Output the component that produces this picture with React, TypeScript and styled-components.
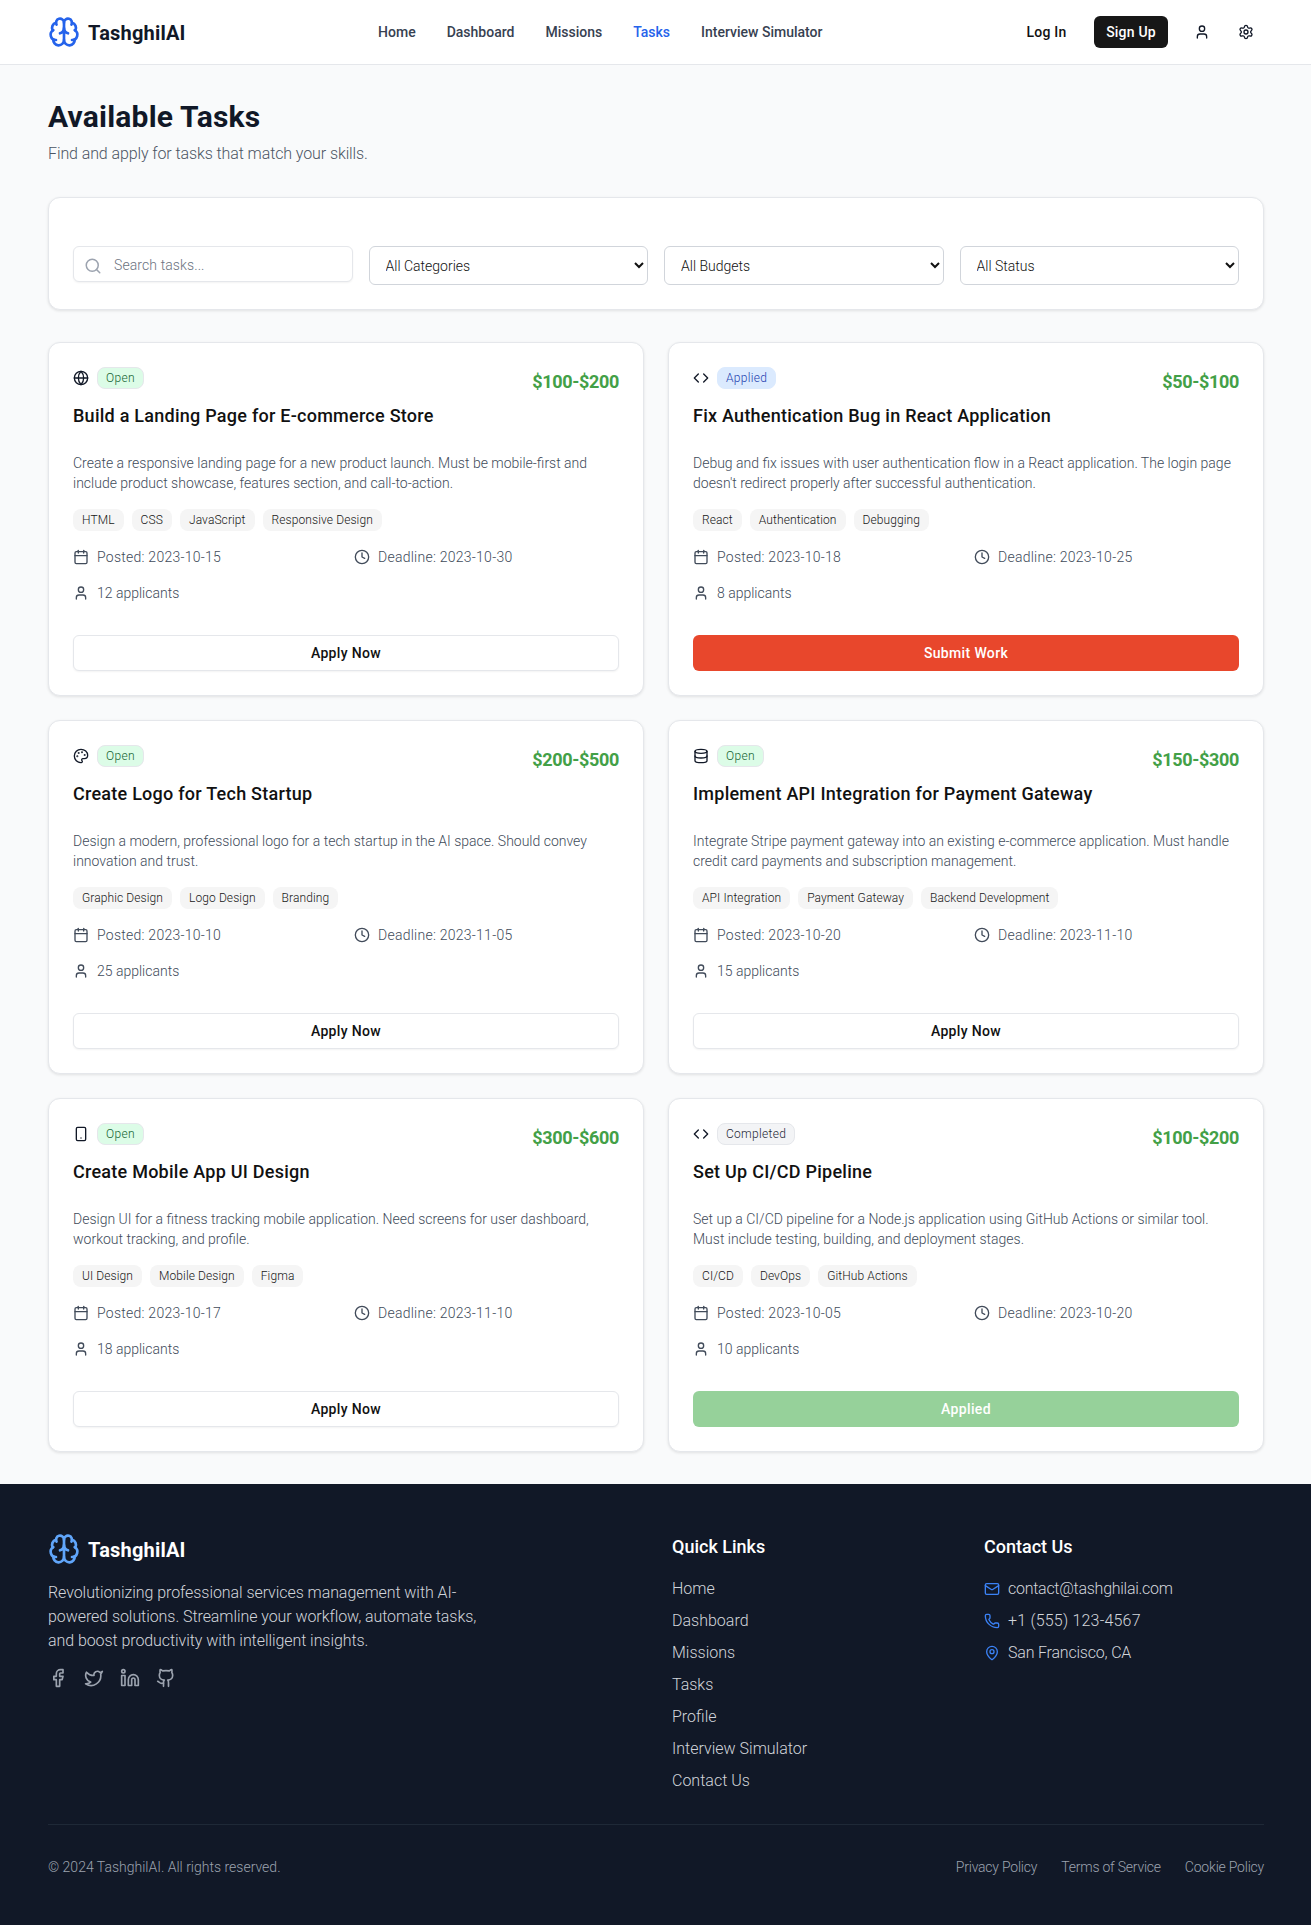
import React from 'react';
import styled, { createGlobalStyle } from 'styled-components';
import { Brain, User, Settings, Search, Globe, Code, Palette, Database, Smartphone, Calendar, Clock, Facebook, Twitter, Linkedin, Github, Mail, Phone, MapPin } from 'lucide-react';

const Global = createGlobalStyle`
  html, body { margin: 0; padding: 0; background: #f9fafb; }
  body { font-family: Roboto, "Liberation Sans", sans-serif; color: #111827; }
  * { box-sizing: border-box; }
`;
const Header = styled.header`
  height: 65px; background: #fff; border-bottom: 1px solid #e5e7eb;
  display: flex; align-items: center; justify-content: space-between; padding: 0 47px 0 48px;
`;
const LogoWrap = styled.div`display: flex; align-items: center; gap: 8px;`;
const LogoText = styled.span<{ $light?: boolean }>`
  font-size: 20px; font-weight: 700; line-height: 28px; letter-spacing: .2px; margin-top: 2px; color: ${p => (p.$light ? '#fff' : '#111827')};
`;
const Nav = styled.nav`display: flex; gap: 31px;`;
const NavLink = styled.a<{ $active?: boolean }>`
  font-size: 14px; font-weight: 500; line-height: 20px; color: ${p => (p.$active ? '#2563eb' : '#374151')};
`;
const Actions = styled.div`display: flex; align-items: center;`;
const LogIn = styled.button`
  border: 0; background: none; font: 500 14px/20px Roboto, sans-serif; letter-spacing: .2px; color: #111; padding: 0; margin-right: 16px; width: 63px; white-space: nowrap;
`;
const SignUp = styled.button`
  border: 0; background: #171717; color: #fff; font: 500 14px/20px Roboto, sans-serif; letter-spacing: .2px; height: 32px; width: 74px; border-radius: 6px; margin-right: 26px;
`;
const IconBtn = styled.span`display: flex; color: #111827; margin-right: 28px; &:last-child { margin-right: 10px; }`;
const Main = styled.main`padding: 34px 47px 32px 48px;`;
const Title = styled.h1`margin: 0 0 7px; font-size: 30px; font-weight: 700; line-height: 36px; letter-spacing: .2px; color: #111827;`;
const Subtitle = styled.p`margin: 0 0 31px; font-size: 16px; font-weight: 300; line-height: 24px; letter-spacing: -.1px; color: #4b5563;`;
const FilterCard = styled.section`
  background: #fff; border: 1px solid #e5e7eb; border-radius: 12px; box-shadow: 0 1px 3px rgba(0,0,0,.1);
  padding: 48px 24px 24px; margin-bottom: 32px; height: 113px;
  display: grid; grid-template-columns: repeat(4, 1fr); gap: 16px; align-items: start;
`;
const SearchBox = styled.label`
  height: 36px; border: 1px solid #e5e7eb; border-radius: 6px; background: #fff; display: flex; align-items: center; gap: 12px; padding: 0 10px;
  box-shadow: 0 1px 2px rgba(0,0,0,.05); color: #9ca3af;
  svg { margin-top: 3px; flex: none; }
`;
const SearchInput = styled.input`
  border: 0; outline: 0; flex: 1; min-width: 0; font: 300 14px/20px Roboto, sans-serif; letter-spacing: .1px; background: transparent; padding: 1px 0 0;
  &::placeholder { color: #6b7280; }
`;
const Select = styled.select`
  height: 39px; border: 1px solid #d1d5db; border-radius: 6px; background: #fff; font: 300 14px/20px Roboto, sans-serif; color: #111; padding: 0 12px; width: 100%;
`;
const Grid = styled.div`display: grid; grid-template-columns: 1fr 1fr; gap: 24px;`;
const Card = styled.article`
  background: #fff; border: 1px solid #e5e7eb; border-radius: 12px; box-shadow: 0 1px 3px rgba(0,0,0,.1); padding: 24px; height: 354px;
`;
const CardTop = styled.div`display: flex; justify-content: space-between; height: 28px; margin-bottom: 7px;`;
const TopLeft = styled.div`display: flex; align-items: center; gap: 8px; height: 22px; color: #111827;`;
const Badge = styled.span<{ $kind: string }>`
  height: 22px; border-radius: 8px; padding: 0 8px; font-size: 12px; font-weight: 300; line-height: 20px; letter-spacing: .3px; border: 1px solid;
  ${p => p.$kind === 'Open' && 'background:#dcfce7;color:#166534;border-color:#e5e7eb;'}
  ${p => p.$kind === 'Applied' && 'background:#dbeafe;color:#1e40af;border-color:#dbeafe;'}
  ${p => p.$kind === 'Completed' && 'background:#f3f4f6;color:#1f2937;border-color:#e5e7eb;'}
`;
const Price = styled.span`font-size: 18px; font-weight: 700; line-height: 28px; letter-spacing: -.33px; color: #43a047; padding-top: 1px;`;
const CardTitle = styled.h3`margin: 0 0 23px; font-size: 18px; font-weight: 500; line-height: 28px; letter-spacing: .25px; color: #111;`;
const Desc = styled.p`margin: 0 0 16px; font-size: 14px; font-weight: 300; line-height: 20px; color: #414b5a; height: 40px;`;
const Tags = styled.div`display: flex; gap: 8px; margin-bottom: 16px;`;
const Tag = styled.span`height: 22px; border-radius: 8px; background: #f5f5f5; padding: 0 9px; font-size: 12px; font-weight: 300; line-height: 22px; letter-spacing: .1px; color: #171717;`;
const Meta = styled.div`display: grid; grid-template-columns: 1fr 1fr; gap: 16px; margin-bottom: 32px;`;
const MetaItem = styled.div<{ $date?: boolean }>`
  display: flex; align-items: center; gap: 8px; font-size: 14px; font-weight: 300; line-height: 20px; color: #414b5a;
  letter-spacing: ${p => (p.$date ? '.25px' : '0')};
`;
const ActionBtn = styled.button<{ $kind: string }>`
  display: block; width: 100%; height: 36px; border-radius: 6px; font: 500 14px/20px Roboto, sans-serif; letter-spacing: .35px;
  ${p => p.$kind === 'outline' && 'background:#fff;color:#111;border:1px solid #e5e7eb;box-shadow:0 1px 2px rgba(0,0,0,.05);'}
  ${p => p.$kind === 'submit' && 'background:#e8472c;color:#fff;border:0;'}
  ${p => p.$kind === 'applied' && 'background:#96d19a;color:#fff;border:0;'}
`;
const Footer = styled.footer`background: #111827; height: 441px; padding: 49px 47px 0 48px; color: #d1d5db;`;
const FooterGrid = styled.div`display: grid; grid-template-columns: repeat(4, 1fr); gap: 32px; height: 291px;`;
const FooterAbout = styled.div`grid-column: span 2;`;
const FooterLogo = styled(LogoWrap)`margin-bottom: 16px; height: 32px;`;
const About = styled.p`margin: 0 0 15px; max-width: 448px; font-size: 16px; font-weight: 300; line-height: 24px; letter-spacing: -.07px;`;
const Socials = styled.div`display: flex; gap: 16px; color: #9ca3af;`;
const FooterHeading = styled.h4`margin: 0 0 16px; font-size: 18px; font-weight: 500; line-height: 28px; color: #fff; height: 28px;`;
const LinkList = styled.ul`list-style: none; margin: 0; padding: 0; display: flex; flex-direction: column; gap: 8px;`;
const FooterLink = styled.li<{ $spacing?: number }>`
  display: flex; align-items: center; gap: 8px; font-size: 16px; font-weight: 300; line-height: 24px; letter-spacing: ${p => p.$spacing ?? 0}px;
`;
const FooterBottom = styled.div`
  border-top: 1px solid #1f2937; padding-top: 32px; display: flex; justify-content: space-between; font-size: 14px; font-weight: 300; line-height: 20px; color: #9ca3af;
`;
const LegalLinks = styled.div`display: flex; gap: 24px; letter-spacing: -.22px;`;
const Blue = styled.span`display: flex; color: #3b82f6;`;

const tasks = [
  { icon: Globe, status: 'Open', price: '$100-$200', title: 'Build a Landing Page for E-commerce Store', desc: 'Create a responsive landing page for a new product launch. Must be mobile-first and include product showcase, features section, and call-to-action.', tags: ['HTML', 'CSS', 'JavaScript', 'Responsive Design'], posted: '2023-10-15', deadline: '2023-10-30', applicants: 12, btn: 'Apply Now', kind: 'outline' },
  { icon: Code, status: 'Applied', price: '$50-$100', title: 'Fix Authentication Bug in React Application', desc: "Debug and fix issues with user authentication flow in a React application. The login page doesn't redirect properly after successful authentication.", tags: ['React', 'Authentication', 'Debugging'], posted: '2023-10-18', deadline: '2023-10-25', applicants: 8, btn: 'Submit Work', kind: 'submit' },
  { icon: Palette, status: 'Open', price: '$200-$500', title: 'Create Logo for Tech Startup', desc: 'Design a modern, professional logo for a tech startup in the AI space. Should convey innovation and trust.', tags: ['Graphic Design', 'Logo Design', 'Branding'], posted: '2023-10-10', deadline: '2023-11-05', applicants: 25, btn: 'Apply Now', kind: 'outline' },
  { icon: Database, status: 'Open', price: '$150-$300', title: 'Implement API Integration for Payment Gateway', desc: 'Integrate Stripe payment gateway into an existing e-commerce application. Must handle credit card payments and subscription management.', tags: ['API Integration', 'Payment Gateway', 'Backend Development'], posted: '2023-10-20', deadline: '2023-11-10', applicants: 15, btn: 'Apply Now', kind: 'outline' },
  { icon: Smartphone, status: 'Open', price: '$300-$600', title: 'Create Mobile App UI Design', desc: 'Design UI for a fitness tracking mobile application. Need screens for user dashboard, workout tracking, and profile.', tags: ['UI Design', 'Mobile Design', 'Figma'], posted: '2023-10-17', deadline: '2023-11-10', applicants: 18, btn: 'Apply Now', kind: 'outline' },
  { icon: Code, status: 'Completed', price: '$100-$200', title: 'Set Up CI/CD Pipeline', desc: 'Set up a CI/CD pipeline for a Node.js application using GitHub Actions or similar tool. Must include testing, building, and deployment stages.', tags: ['CI/CD', 'DevOps', 'GitHub Actions'], posted: '2023-10-05', deadline: '2023-10-20', applicants: 10, btn: 'Applied', kind: 'applied' },
];

export default function App() {
  return (
    <>
      <Global />
      <Header>
        <LogoWrap><Brain size={32} color="#2563eb" /><LogoText>TashghilAI</LogoText></LogoWrap>
        <Nav>
          <NavLink>Home</NavLink><NavLink>Dashboard</NavLink><NavLink>Missions</NavLink><NavLink $active>Tasks</NavLink><NavLink>Interview Simulator</NavLink>
        </Nav>
        <Actions>
          <LogIn>Log In</LogIn><SignUp>Sign Up</SignUp>
          <IconBtn><User size={16} /></IconBtn><IconBtn><Settings size={16} /></IconBtn>
        </Actions>
      </Header>
      <Main>
        <Title>Available Tasks</Title>
        <Subtitle>Find and apply for tasks that match your skills.</Subtitle>
        <FilterCard>
          <SearchBox><Search size={18} /><SearchInput placeholder="Search tasks..." /></SearchBox>
          <Select><option>All Categories</option></Select>
          <Select><option>All Budgets</option></Select>
          <Select><option>All Status</option></Select>
        </FilterCard>
        <Grid>
          {tasks.map(t => (
            <Card key={t.title}>
              <CardTop>
                <TopLeft><t.icon size={16} /><Badge $kind={t.status}>{t.status}</Badge></TopLeft>
                <Price>{t.price}</Price>
              </CardTop>
              <CardTitle>{t.title}</CardTitle>
              <Desc>{t.desc}</Desc>
              <Tags>{t.tags.map(x => <Tag key={x}>{x}</Tag>)}</Tags>
              <Meta>
                <MetaItem $date><Calendar size={16} />Posted: {t.posted}</MetaItem>
                <MetaItem $date><Clock size={16} />Deadline: {t.deadline}</MetaItem>
                <MetaItem><User size={16} />{t.applicants} applicants</MetaItem>
              </Meta>
              <ActionBtn $kind={t.kind}>{t.btn}</ActionBtn>
            </Card>
          ))}
        </Grid>
      </Main>
      <Footer>
        <FooterGrid>
          <FooterAbout>
            <FooterLogo><Brain size={32} color="#60a5fa" /><LogoText $light>TashghilAI</LogoText></FooterLogo>
            <About>Revolutionizing professional services management with AI-powered solutions. Streamline your workflow, automate tasks, and boost productivity with intelligent insights.</About>
            <Socials><Facebook size={20} /><Twitter size={20} /><Linkedin size={20} /><Github size={20} /></Socials>
          </FooterAbout>
          <div>
            <FooterHeading>Quick Links</FooterHeading>
            <LinkList>
              {['Home', 'Dashboard', 'Missions', 'Tasks', 'Profile', 'Interview Simulator', 'Contact Us'].map(l => <FooterLink key={l}>{l}</FooterLink>)}
            </LinkList>
          </div>
          <div>
            <FooterHeading>Contact Us</FooterHeading>
            <LinkList>
              <FooterLink $spacing={-0.27}><Blue><Mail size={16} /></Blue>contact@tashghilai.com</FooterLink>
              <FooterLink $spacing={0.2}><Blue><Phone size={16} /></Blue>+1 (555) 123-4567</FooterLink>
              <FooterLink $spacing={-0.2}><Blue><MapPin size={16} /></Blue>San Francisco, CA</FooterLink>
            </LinkList>
          </div>
        </FooterGrid>
        <FooterBottom>
          <span>© 2024 TashghilAI. All rights reserved.</span>
          <LegalLinks><span>Privacy Policy</span><span>Terms of Service</span><span>Cookie Policy</span></LegalLinks>
        </FooterBottom>
      </Footer>
    </>
  );
}
